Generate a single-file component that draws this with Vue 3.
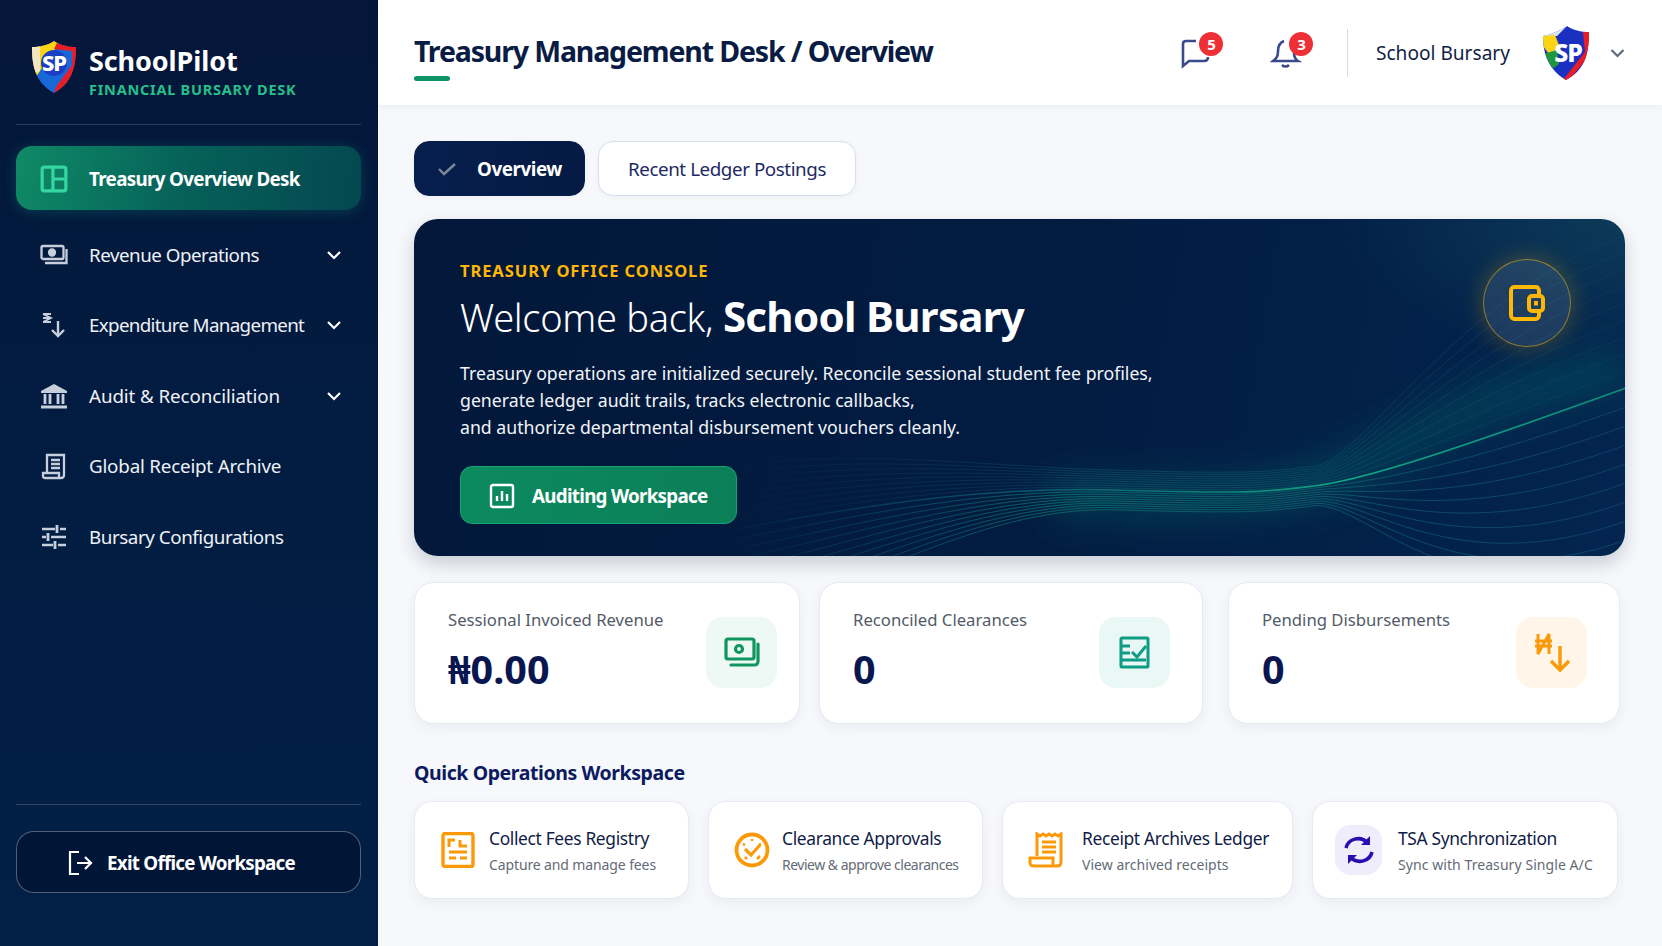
<script setup>
const navItems = [
  { label: 'Revenue Operations', icon: 'money', caret: true, ls: -0.5 },
  { label: 'Expenditure Management', icon: 'spend', caret: true, ls: -0.68 },
  { label: 'Audit & Reconciliation', icon: 'bank', caret: true, ls: -0.1 },
  { label: 'Global Receipt Archive', icon: 'receipt', caret: false, ls: -0.2 },
  { label: 'Bursary Configurations', icon: 'sliders', caret: false, ls: -0.44 }
]

const stats = [
  { label: 'Sessional Invoiced Revenue', value: '₦0.00', icon: 'money', tone: 'green', width: 386, pad: 22 },
  { label: 'Reconciled Clearances', value: '0', icon: 'check', tone: 'teal', width: 384, pad: 32 },
  { label: 'Pending Disbursements', value: '0', icon: 'naira', tone: 'amber', width: 392, pad: 32 }
]

const quick = [
  { title: 'Collect Fees Registry', sub: 'Capture and manage fees', icon: 'form', width: 275, gap: 13, subLs: -0.12 },
  { title: 'Clearance Approvals', sub: 'Review & approve clearances', icon: 'badge', width: 275, gap: 12, subLs: -0.5 },
  { title: 'Receipt Archives Ledger', sub: 'View archived receipts', icon: 'receipt', width: 291, gap: 18, subLs: 0.03 },
  { title: 'TSA Synchronization', sub: 'Sync with Treasury Single A/C', icon: 'sync', width: 306, gap: 16, subLs: 0.07 }
]

// fan of lines across the hero, pinched near x=880
const waves = []
for (let i = -9; i <= 9; i++) {
  const up = i < 0 ? -i : 0
  const down = i > 0 ? i : 0
  const leftY = 284 + i * 7 + down * 3
  const midY = 271 + i * 2.2
  const rightY = 169 - up * 17 + down * 19
  const d = `M300 ${leftY + 30} C 430 ${leftY + 6}, 560 ${midY - 4}, 700 ${midY} S 850 ${midY + 2}, 900 ${midY - 4} S 1040 ${rightY + 62}, 1212 ${rightY}`
  waves.push({ d, key: i, main: i === 0, stroke: i === 0 ? 'url(#waveMain)' : i < 0 ? 'url(#waveBlue)' : 'url(#waveGreen)' })
}
</script>

<template>
  <div class="page">
    <aside class="sidebar">
      <div class="brand">
        <svg class="shield" viewBox="0 0 44 52">
          <defs>
            <clipPath id="shieldClip"><path d="M22 0 C28 4 36 6 44 6 C44 26 40 42 22 52 C4 42 0 26 0 6 C8 6 16 4 22 0Z" /></clipPath>
          </defs>
          <g clip-path="url(#shieldClip)">
            <rect width="44" height="52" fill="#1868d8" />
            <path d="M0 0H29L12 24L4 36L0 30Z" fill="#fbd416" />
            <path d="M0 4H8V30L3 32L0 26Z" fill="#f3e7c2" />
            <path d="M26 0H44V32L28 52H22L24 46L40 24V10L22 8Z" fill="#ea1c24" />
          </g>
          <circle cx="22" cy="22" r="13" fill="#1b3fc4" />
          <text x="22" y="30" text-anchor="middle" class="shield-text">SP</text>
        </svg>
        <div>
          <div class="brand-name">SchoolPilot</div>
          <div class="brand-sub">FINANCIAL BURSARY DESK</div>
        </div>
      </div>

      <nav class="nav">
        <div class="nav-item active">
          <svg class="nav-icon" viewBox="0 0 26 26" fill="none" stroke="#35d6a0" stroke-width="3">
            <rect x="2" y="2" width="22" height="22" rx="2" />
            <path d="M12 2V24M12 13H24" />
          </svg>
          <span>Treasury Overview Desk</span>
        </div>
        <div v-for="item in navItems" :key="item.label" class="nav-item">
          <svg class="nav-icon" viewBox="0 0 28 28" fill="none" stroke="#c8cfdc" stroke-width="2.3">
            <template v-if="item.icon === 'money'">
              <rect x="1.5" y="5" width="22" height="13" rx="1.5" />
              <circle cx="12" cy="11.5" r="3" fill="#c8cfdc" />
              <path d="M26.5 8V22H5" />
            </template>
            <template v-else-if="item.icon === 'spend'">
              <path d="M3 3H11M3 7H11M3 11H11M3 3L11 7L3 11" stroke-width="1.8" />
              <path d="M18 10V25M12 19L18 25L24 19" stroke-width="2.4" />
            </template>
            <template v-else-if="item.icon === 'bank'">
              <path d="M14 2L27 9V11H1V9Z" fill="#c8cfdc" stroke="none" />
              <path d="M5 12V22M10 12V22M18 12V22M23 12V22" stroke-width="2.8" />
              <path d="M1 25H27" stroke-width="3" />
            </template>
            <template v-else-if="item.icon === 'receipt'">
              <path d="M7 20V3H24V23C24 25 23 26 21 26H5C3 26 3 25 3 23V21H19V26" />
              <path d="M11 8H20M11 12H20M11 16H20" />
            </template>
            <template v-else>
              <path d="M2 6H15M20 6H26M2 14H6M11 14H26M2 22H13M18 22H26" stroke-width="2.4" />
              <path d="M17 2V10M8 10V18M15 18V26" stroke-width="2.8" />
            </template>
          </svg>
          <span :style="{ letterSpacing: item.ls + 'px' }">{{ item.label }}</span>
          <svg v-if="item.caret" class="caret" viewBox="0 0 14 10" fill="none" stroke="#fff" stroke-width="2.2"><path d="M1 2L7 8L13 2" /></svg>
        </div>
      </nav>

      <div class="side-foot">
        <button class="exit">
          <svg viewBox="0 0 26 26" fill="none" stroke="#fff" stroke-width="2.2" width="26" height="26">
            <path d="M12 2H3V24H12" />
            <path d="M10 13H24M18 7L24 13L18 19" />
          </svg>
          Exit Office Workspace
        </button>
      </div>
    </aside>

    <div class="content">
      <header class="topbar">
        <div class="page-title">
          <h1>Treasury Management Desk / Overview</h1>
          <i class="title-mark"></i>
        </div>
        <div class="top-actions">
          <div class="bell-wrap chat">
            <svg viewBox="0 0 32 32" fill="none" stroke="#3a4a8a" stroke-width="2.6" width="32" height="32">
              <path d="M16 4H6C4 4 3 5 3 7V29L9 24H24C26 24 28 23 28 20" />
            </svg>
            <b class="badge">5</b>
          </div>
          <div class="bell-wrap alarm">
            <svg viewBox="0 0 32 32" fill="none" stroke="#3a4a8a" stroke-width="2.6" width="32" height="32">
              <path d="M14 4C9 6 8 10 8 14C8 19 7 21 3 24H28C25 22 24 20 24 16" />
              <path d="M12 28C14 30 17 30 19 28" />
            </svg>
            <b class="badge">3</b>
          </div>
          <div class="top-sep"></div>
          <span class="user-name">School Bursary</span>
          <svg class="user-logo" viewBox="0 0 46 54">
            <defs>
              <clipPath id="userClip"><path d="M24 0C30 4 38 6 46 6C46 28 42 44 23 54C6 44 0 28 0 10C10 8 18 4 24 0Z" /></clipPath>
            </defs>
            <g clip-path="url(#userClip)">
              <rect width="46" height="54" fill="#1a30c0" />
              <path d="M0 0H24L14 10L0 10Z" fill="#dfe7f2" />
              <path d="M0 10L12 9L18 24L6 28L0 20Z" fill="#fbd416" />
              <path d="M0 28L14 24L16 38L8 44Z" fill="#22963e" />
              <path d="M46 4V30L26 54H20L42 26L40 6Z" fill="#ea1c24" />
            </g>
            <text x="25" y="36" text-anchor="middle" class="user-logo-text">SP</text>
          </svg>
          <svg class="user-caret" viewBox="0 0 14 10" fill="none" stroke="#5f6b7a" stroke-width="2.2"><path d="M1 2L7 8L13 2" /></svg>
        </div>
      </header>

      <main class="main">
        <div class="tabs">
          <button class="tab tab-on">
            <svg viewBox="0 0 18 14" fill="none" stroke="#7d879c" stroke-width="2.4" width="18" height="14"><path d="M1 7L6 12L17 2" /></svg>
            Overview
          </button>
          <button class="tab">Recent Ledger Postings</button>
        </div>

        <section class="hero">
          <svg class="hero-waves" viewBox="0 0 1211 337" preserveAspectRatio="none" fill="none">
            <defs>
              <linearGradient id="waveMain" x1="300" x2="1212" y1="0" y2="0" gradientUnits="userSpaceOnUse">
                <stop offset="0" stop-color="#0e6f80" stop-opacity="0" />
                <stop offset="0.35" stop-color="#0e6f80" stop-opacity="0.7" />
                <stop offset="0.7" stop-color="#10a883" />
                <stop offset="1" stop-color="#0f8a7a" />
              </linearGradient>
              <linearGradient id="waveBlue" x1="300" x2="1212" y1="0" y2="0" gradientUnits="userSpaceOnUse">
                <stop offset="0" stop-color="#1b6c8c" stop-opacity="0" />
                <stop offset="0.5" stop-color="#146c7e" stop-opacity="0.42" />
                <stop offset="1" stop-color="#1b6c8c" stop-opacity="0.13" />
              </linearGradient>
              <linearGradient id="waveGreen" x1="300" x2="1212" y1="0" y2="0" gradientUnits="userSpaceOnUse">
                <stop offset="0" stop-color="#0f8a7a" stop-opacity="0" />
                <stop offset="0.35" stop-color="#0f8a7a" stop-opacity="0.6" />
                <stop offset="1" stop-color="#1b6c8c" stop-opacity="0.4" />
              </linearGradient>
              <filter id="waveBlur" filterUnits="userSpaceOnUse" x="400" y="0" width="1000" height="400"><feGaussianBlur stdDeviation="18" /></filter>
            </defs>
            <path d="M640 280C780 282 880 285 960 240S1100 170 1212 150" stroke="#0d7a6c" stroke-opacity="0.3" stroke-width="40" filter="url(#waveBlur)" />
            <path v-for="w in waves" :key="w.key" :d="w.d" :stroke="w.stroke" :stroke-width="w.main ? 1.6 : 1" />
          </svg>

          <div class="hero-body">
            <div class="eyebrow">TREASURY OFFICE CONSOLE</div>
            <h2 class="welcome">Welcome back, <strong>School Bursary</strong></h2>
            <p class="hero-text">
              Treasury operations are initialized securely. Reconcile sessional student fee profiles,<br />
              generate ledger audit trails, tracks electronic callbacks,<br />
              and authorize departmental disbursement vouchers cleanly.
            </p>
            <button class="audit-btn">
              <svg viewBox="0 0 26 26" fill="none" stroke="#fff" stroke-width="2.4" width="26" height="26">
                <rect x="2" y="2" width="22" height="22" rx="2" />
                <path d="M8 18V13M13 18V8M18 18V11" />
              </svg>
              Auditing Workspace
            </button>
          </div>

          <div class="hero-badge">
            <svg viewBox="0 0 36 36" fill="none" stroke="#fdb704" stroke-width="4" width="36" height="36">
              <path d="M30 11V6C30 4 29 2 27 2H5C3 2 2 4 2 6V30C2 32 3 34 5 34H27C29 34 30 32 30 30V26" />
              <rect x="20" y="11" width="14" height="15" rx="3" />
              <rect x="25.5" y="16.5" width="3" height="3.5" fill="#fdb704" stroke-width="1" />
            </svg>
          </div>
        </section>

        <div class="stats">
          <div v-for="s in stats" :key="s.label" class="stat" :style="{ width: s.width + 'px', paddingRight: s.pad + 'px' }">
            <div>
              <div class="stat-label">{{ s.label }}</div>
              <div class="stat-value">{{ s.value }}</div>
            </div>
            <div class="stat-icon" :class="s.tone">
              <svg v-if="s.icon === 'money'" viewBox="0 0 36 32" fill="none" stroke="#0f9560" stroke-width="3.2" width="36" height="32">
                <rect x="2" y="2" width="28" height="20" rx="2" />
                <circle cx="15" cy="12" r="3.5" />
                <path d="M34 7V24C34 27 33 28 30 28H7" stroke-linecap="round" />
              </svg>
              <svg v-else-if="s.icon === 'check'" viewBox="0 0 32 36" fill="none" stroke="#0f9c84" stroke-width="3" width="32" height="36">
                <rect x="2" y="3" width="27" height="29" rx="1" />
                <path d="M2 11H11M2 18H11M2 25H27" />
                <path d="M13 17L18 22L27 11" />
              </svg>
              <svg v-else viewBox="0 0 36 42" fill="none" stroke="#fb9a09" width="36" height="42">
                <path d="M4 2V22L15 2V22M1 9H18M1 14H18" stroke-width="3" />
                <path d="M26 14V38M17 29L26 38L35 29" stroke-width="3.4" />
              </svg>
            </div>
          </div>
        </div>

        <h3 class="section-title">Quick Operations Workspace</h3>
        <div class="quick">
          <div v-for="q in quick" :key="q.title" class="quick-card" :style="{ width: q.width + 'px', gap: q.gap + 'px' }">
            <div v-if="q.icon === 'sync'" class="sync-box">
              <svg viewBox="0 0 32 32" fill="none" stroke="#2a0fb0" stroke-width="3.6" width="32" height="32">
                <path d="M3 14C5 5 17 1 25 9" />
                <path d="M27 2V11H18" stroke-width="0" fill="#2a0fb0" />
                <path d="M29 18C27 27 15 31 7 23" />
                <path d="M5 30V21H14" stroke-width="0" fill="#2a0fb0" />
              </svg>
            </div>
            <svg v-else class="quick-icon" viewBox="0 0 36 36" fill="none" stroke="#fb9a09" stroke-width="3.4">
              <template v-if="q.icon === 'form'">
                <rect x="3" y="1.5" width="30" height="33" rx="2" />
                <path d="M9 15V8H15M20 8V14H27M9 20H27M9 26H16M20 26H27" stroke-width="3" />
              </template>
              <template v-else-if="q.icon === 'badge'">
                <ellipse cx="18" cy="18" rx="15.5" ry="15.5" stroke-width="3.8" />
                <path d="M18 7V9M9 12L11 13M25 13L27 12M11 25L13 27M23 27L26 24" stroke-width="2.6" />
                <path d="M11 17L17 23L26 13" stroke-width="3.2" />
              </template>
              <template v-else>
                <path d="M9 24V2L12 4L15 2L18 4L21 2L24 4L27 2L30 4L33 2V30C33 33 31 34 29 34H6C3 34 2 33 2 30V26H25V34" stroke-width="3" />
                <path d="M14 10H28M14 15H28M14 20H28" stroke-width="3" />
              </template>
            </svg>
            <div>
              <div class="quick-title">{{ q.title }}</div>
              <div class="quick-sub" :style="{ letterSpacing: q.subLs + 'px' }">{{ q.sub }}</div>
            </div>
          </div>
        </div>
      </main>
    </div>
  </div>
</template>

<style>
html, body { margin: 0; background: #f7f8fb; }
</style>

<style scoped>
.page {
  display: flex;
  width: 1662px;
  height: 946px;
  overflow: hidden;
  font-family: "Noto Sans", "Open Sans", sans-serif;
  background: #f7f8fb;
}

.sidebar {
  width: 378px;
  flex-shrink: 0;
  display: flex;
  flex-direction: column;
  box-sizing: border-box;
  padding: 0 17px 0 16px;
  background: linear-gradient(180deg, #04163a 0%, #021d42 55%, #021f47 100%);
  color: #fff;
}

.brand {
  display: flex;
  align-items: flex-start;
  gap: 13px;
  height: 125px;
  box-sizing: border-box;
  padding: 41px 0 0 16px;
  border-bottom: 1px solid rgba(255, 255, 255, 0.16);
}
.shield { width: 44px; height: 52px; flex-shrink: 0; }
.shield-text {
  font: 800 22px "Noto Sans", sans-serif;
  fill: #fff;
  letter-spacing: -1px;
}
.brand-name { font-size: 27px; font-weight: 700; line-height: 34px; margin-top: 3px; letter-spacing: -0.1px; }
.brand-sub {
  font-size: 14.5px;
  font-weight: 700;
  line-height: 18px;
  letter-spacing: 0.75px;
  color: #27c08a;
  margin-top: 2px;
  white-space: nowrap;
}

.nav { margin-top: 21px; flex: 1; }
.nav-item {
  display: flex;
  align-items: center;
  height: 70.5px;
  box-sizing: border-box;
  padding: 1px 20px 0 24px;
  font-size: 18.8px;
  color: #eef1f6;
}
.nav-item span { margin-left: 21px; flex: 1; white-space: nowrap; }
.nav-item.active {
  height: 64px;
  margin-bottom: 9px;
  padding-top: 2px;
  border-radius: 16px;
  background: linear-gradient(100deg, #0f8a66 0%, #066059 50%, #04474f 100%);
  box-shadow: 0 2px 14px rgba(20, 170, 130, 0.25);
  font-weight: 700;
  letter-spacing: -0.66px;
  color: #fff;
}
.nav-icon { width: 28px; height: 28px; flex-shrink: 0; }
.caret { width: 14px; height: 10px; }

.side-foot {
  height: 142px;
  box-sizing: border-box;
  padding-top: 26px;
  border-top: 1px solid rgba(255, 255, 255, 0.18);
}
.exit {
  display: flex;
  align-items: center;
  justify-content: center;
  gap: 14px;
  width: 100%;
  height: 62px;
  padding: 1px 15px 0 0;
  font: 700 18.8px "Noto Sans", sans-serif;
  letter-spacing: -0.76px;
  color: #fff;
  background: rgba(2, 18, 48, 0.7);
  border: 1px solid rgba(255, 255, 255, 0.32);
  border-radius: 18px;
}

.content { flex: 1; min-width: 0; display: flex; flex-direction: column; }

.topbar {
  height: 105px;
  flex-shrink: 0;
  box-sizing: border-box;
  display: flex;
  align-items: center;
  justify-content: space-between;
  padding: 0 37px 0 36px;
  background: #fff;
  box-shadow: 0 2px 8px rgba(30, 50, 90, 0.06);
}
.page-title { position: relative; }
.page-title h1 {
  margin: 0 0 3px;
  font-size: 28.5px;
  line-height: 38px;
  font-weight: 700;
  letter-spacing: -1.15px;
  color: #0b1c44;
}
.title-mark {
  position: absolute;
  left: 0;
  bottom: -8px;
  width: 36px;
  height: 5px;
  border-radius: 3px;
  background: #0f9467;
}
.top-actions { display: flex; align-items: center; }
.bell-wrap { position: relative; width: 32px; height: 32px; }
.chat { margin-right: 58px; }
.alarm { margin-right: 44.5px; }
.badge {
  position: absolute;
  top: -5px;
  left: 19px;
  width: 24px;
  height: 24px;
  border-radius: 50%;
  background: #ee2f35;
  color: #fff;
  font: 700 15px/24px "Noto Sans", sans-serif;
  text-align: center;
}
.top-sep { width: 1px; height: 48px; background: #d5dbe8; margin-right: 28px; }
.user-name { font-size: 19.1px; color: #111d44; margin-right: 33px; white-space: nowrap; }
.user-logo { width: 46px; height: 54px; margin-right: 21px; }
.user-logo-text {
  font: 800 25px "Noto Sans", sans-serif;
  fill: #fff;
  letter-spacing: -1px;
}
.user-caret { width: 15px; height: 10px; }

.main { padding: 36px 0 0 36px; }

.tabs { display: flex; gap: 13px; }
.tab {
  height: 55px;
  padding: 0 29px;
  font: 400 18.8px "Noto Sans", sans-serif;
  letter-spacing: -0.43px;
  color: #1d2a63;
  background: #fff;
  border: 1px solid #d8deeb;
  border-radius: 15px;
  box-shadow: 0 2px 6px rgba(30, 50, 90, 0.04);
}
.tab-on {
  display: flex;
  align-items: center;
  gap: 21px;
  padding: 0 22px 0 23px;
  font-weight: 700;
  color: #fff;
  background: linear-gradient(90deg, #071f4d, #041a44);
  border-color: #071f4d;
}

.hero {
  position: relative;
  width: 1211px;
  height: 337px;
  margin-top: 23px;
  border-radius: 24px;
  overflow: hidden;
  color: #fff;
  background:
    radial-gradient(420px 200px at 100% 0%, rgba(30, 100, 110, 0.35), transparent 70%),
    linear-gradient(100deg, #03183a 0%, #021c42 55%, #03254f 100%);
  box-shadow: 0 8px 18px rgba(20, 35, 70, 0.2);
}
.hero-waves { position: absolute; inset: 0; width: 100%; height: 100%; }
.hero-body { position: relative; padding: 41px 0 0 46px; }
.eyebrow { font-size: 16.5px; font-weight: 700; line-height: 22px; letter-spacing: 0.93px; color: #fdb704; }
.welcome { margin: 7px 0 0; font-size: 38px; line-height: 54px; font-weight: 300; letter-spacing: -0.3px; }
.welcome strong { font-size: 42px; font-weight: 700; letter-spacing: -0.7px; }
.hero-text { margin: 16px 0 0; font-size: 17.7px; line-height: 27px; color: #f1f4f8; }
.audit-btn {
  display: flex;
  align-items: center;
  gap: 17px;
  height: 58px;
  margin-top: 25px;
  padding: 2px 29px 0 28px;
  font: 700 18.8px "Noto Sans", sans-serif;
  letter-spacing: -0.72px;
  color: #fff;
  background: linear-gradient(90deg, #0c8a5f, #0b7f58);
  border: 1px solid #17a374;
  border-radius: 12px;
}
.hero-badge {
  position: absolute;
  top: 40px;
  right: 54px;
  width: 88px;
  height: 88px;
  box-sizing: border-box;
  display: grid;
  place-items: center;
  border-radius: 50%;
  border: 1.5px solid rgba(253, 183, 4, 0.5);
  background: rgba(255, 255, 255, 0.1);
  box-shadow: 0 0 24px rgba(253, 183, 4, 0.28);
}

.stats { display: flex; margin-top: 26px; }
.stat {
  height: 142px;
  box-sizing: border-box;
  display: flex;
  align-items: flex-start;
  justify-content: space-between;
  padding: 25px 23px 0 33px;
  background: #fff;
  border: 1px solid #e6eaf3;
  border-radius: 20px;
  box-shadow: 0 4px 12px rgba(30, 50, 90, 0.06);
}
.stat + .stat { margin-left: 19px; }
.stat:last-child { margin-left: 25px; }
.stat-label { font-size: 16.7px; line-height: 24px; color: #535b68; white-space: nowrap; }
.stat-value { margin-top: 11px; font-size: 39.5px; line-height: 52px; font-weight: 700; color: #0a1650; }
.stat-icon {
  width: 71px;
  height: 71px;
  margin-top: 9px;
  flex-shrink: 0;
  display: grid;
  place-items: center;
  border-radius: 17px;
}
.green { background: #eef8f4; }
.teal { background: #e9f7f5; }
.amber { background: #fff6e9; }

.section-title {
  margin: 35px 0 0;
  font-size: 19.5px;
  line-height: 28px;
  font-weight: 700;
  letter-spacing: -0.42px;
  color: #0c1a60;
}

.quick { display: flex; gap: 19px; margin-top: 14px; }
.quick-card {
  height: 98px;
  box-sizing: border-box;
  display: flex;
  align-items: center;
  padding-left: 25px;
  background: #fff;
  border: 1px solid #e6eaf3;
  border-radius: 18px;
  box-shadow: 0 4px 12px rgba(30, 50, 90, 0.06);
}
.quick-icon { width: 36px; height: 36px; flex-shrink: 0; }
.sync-box {
  width: 47px;
  height: 50px;
  margin-left: -3px;
  flex-shrink: 0;
  display: grid;
  place-items: center;
  border-radius: 16px;
  background: #efecfb;
}
.quick-title { padding-top: 2px; font-size: 17.4px; line-height: 25px; letter-spacing: -0.35px; color: #101c46; white-space: nowrap; }
.quick-sub { margin-top: 3px; font-size: 14px; line-height: 22px; color: #646b76; white-space: nowrap; }
</style>
